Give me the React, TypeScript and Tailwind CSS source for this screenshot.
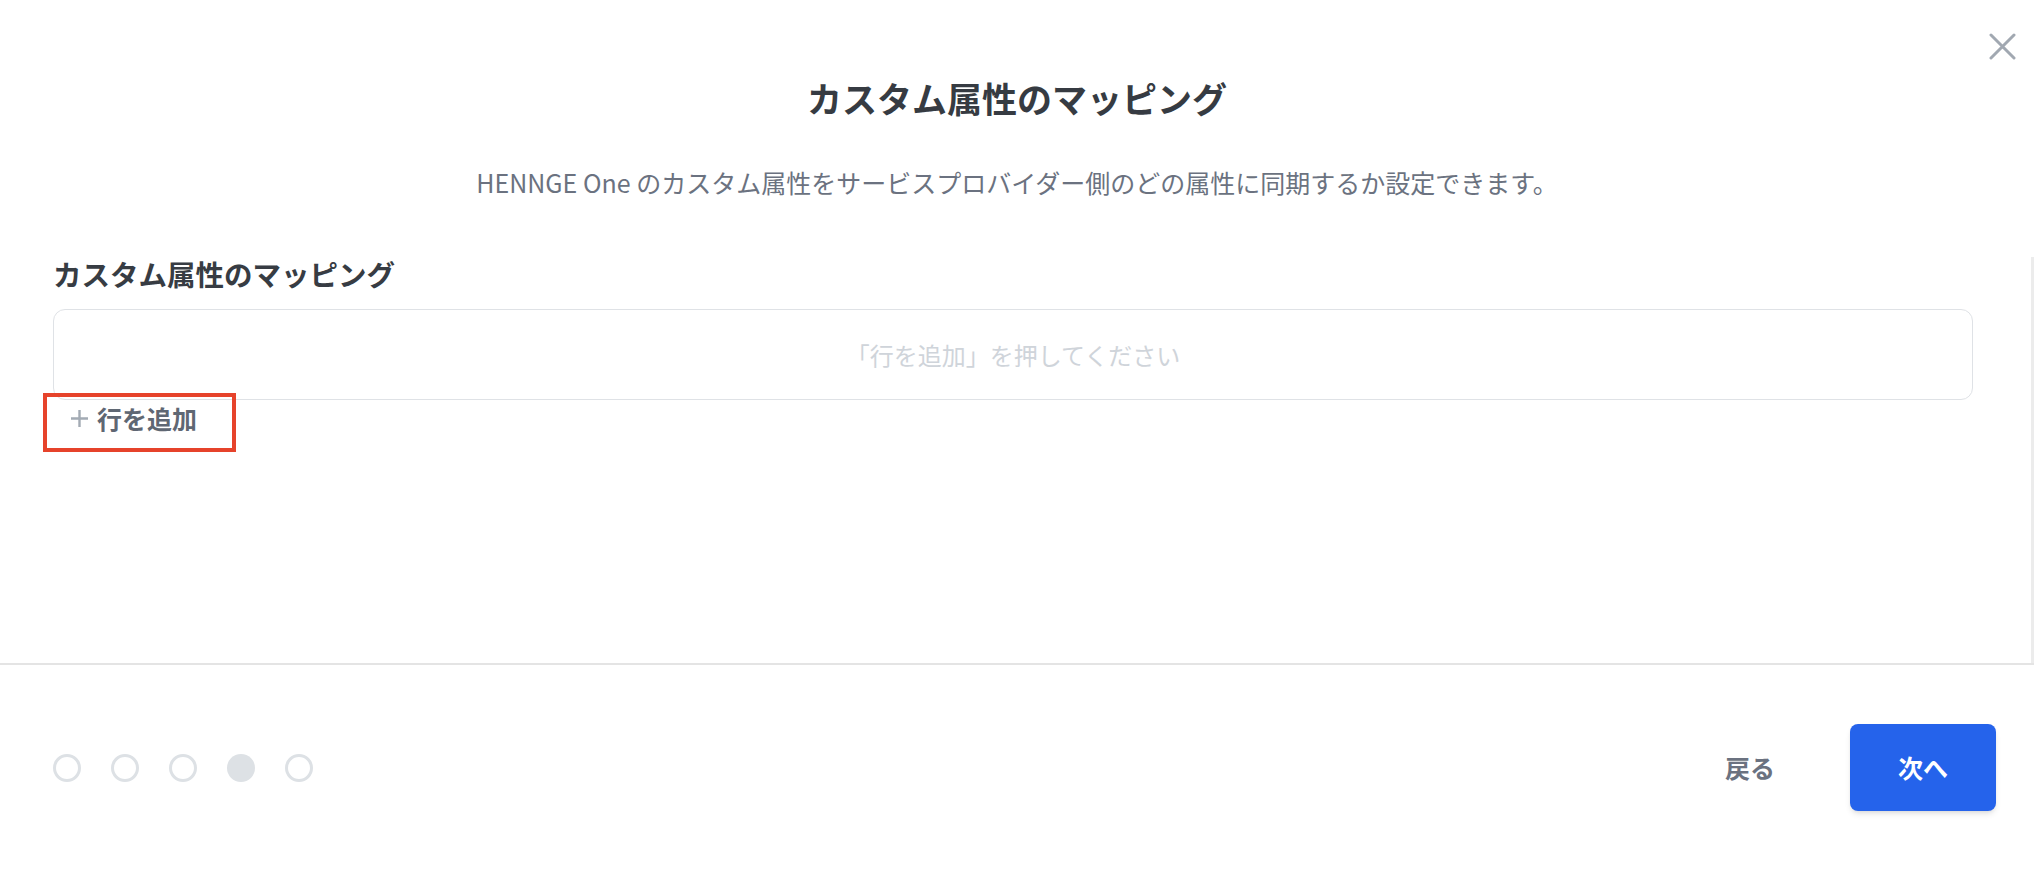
import React from 'react'

const font = { fontFamily: '"Noto Sans CJK JP", "Noto Sans", sans-serif' }

function CloseIcon() {
  return (
    <svg width="27" height="27" viewBox="0 0 27 27" fill="none">
      <path d="M2 2L25 25M25 2L2 25" stroke="#a1a8b1" strokeWidth="3" strokeLinecap="round" />
    </svg>
  )
}

function PlusIcon() {
  return (
    <svg width="19" height="19" viewBox="0 0 19 19" fill="none">
      <path d="M9.5 1V18M1 9.5H18" stroke="#a3abb4" strokeWidth="2.4" />
    </svg>
  )
}

export default function App() {
  const steps = [false, false, false, true, false]

  return (
    <div className="relative w-full h-[884px] bg-white overflow-hidden" style={font}>
      {/* Close */}
      <button className="absolute top-[33px] right-[18px] w-[27px] h-[27px] flex items-center justify-center">
        <CloseIcon />
      </button>

      {/* Header */}
      <div className="h-[257px] flex flex-col items-center pt-[74px]">
        <h1 className="text-[35px] leading-[48px] font-bold text-[#363b42]">カスタム属性のマッピング</h1>
        <p className="mt-[42px] text-[25px] leading-[36px] text-[#6b7280]">
          HENNGE One のカスタム属性をサービスプロバイダー側のどの属性に同期するか設定できます。
        </p>
      </div>

      {/* Scroll area */}
      <div className="h-[406px] border-r-[3px] border-[#ececec] pl-[53px] pr-[58px]">
        <h2 className="text-[28.5px] leading-[34px] font-bold text-[#373c43]">カスタム属性のマッピング</h2>

        <div className="mt-[18px] h-[91px] rounded-[12px] border border-[#dfe2e6] flex items-center justify-center">
          <span className="text-[24px] text-[#cfd4da]">「行を追加」を押してください</span>
        </div>

        <div className="relative">
          <button className="flex items-center gap-[8px] pl-[17px] h-[36px]">
            <PlusIcon />
            <span className="text-[25px] leading-[36px] font-bold text-[#5f6773]">行を追加</span>
          </button>
          {/* highlight annotation */}
          <div className="absolute left-[-10px] top-[-7px] w-[193px] h-[59px] border-[4px] border-[#e6432b] pointer-events-none" />
        </div>
      </div>

      {/* Divider */}
      <div className="h-[2px] bg-[#e4e4e4]" />

      {/* Footer */}
      <div className="flex items-start justify-between pl-[53px] pr-[38px] pt-[59px]">
        <div className="flex items-center gap-[30px] h-[87px]">
          {steps.map((active, i) => (
            <span
              key={i}
              className={
                active
                  ? 'w-[28px] h-[28px] rounded-full bg-[#dde1e5]'
                  : 'w-[28px] h-[28px] rounded-full border-[3px] border-[#dde1e5]'
              }
            />
          ))}
        </div>
        <div className="flex items-center gap-[51px]">
          <button className="px-[24px] h-[87px] text-[25px] font-bold text-[#6b7280]">戻る</button>
          <button className="w-[146px] h-[87px] rounded-[8px] bg-[#2563eb] text-[25px] font-bold text-white shadow-md">
            次へ
          </button>
        </div>
      </div>
    </div>
  )
}
